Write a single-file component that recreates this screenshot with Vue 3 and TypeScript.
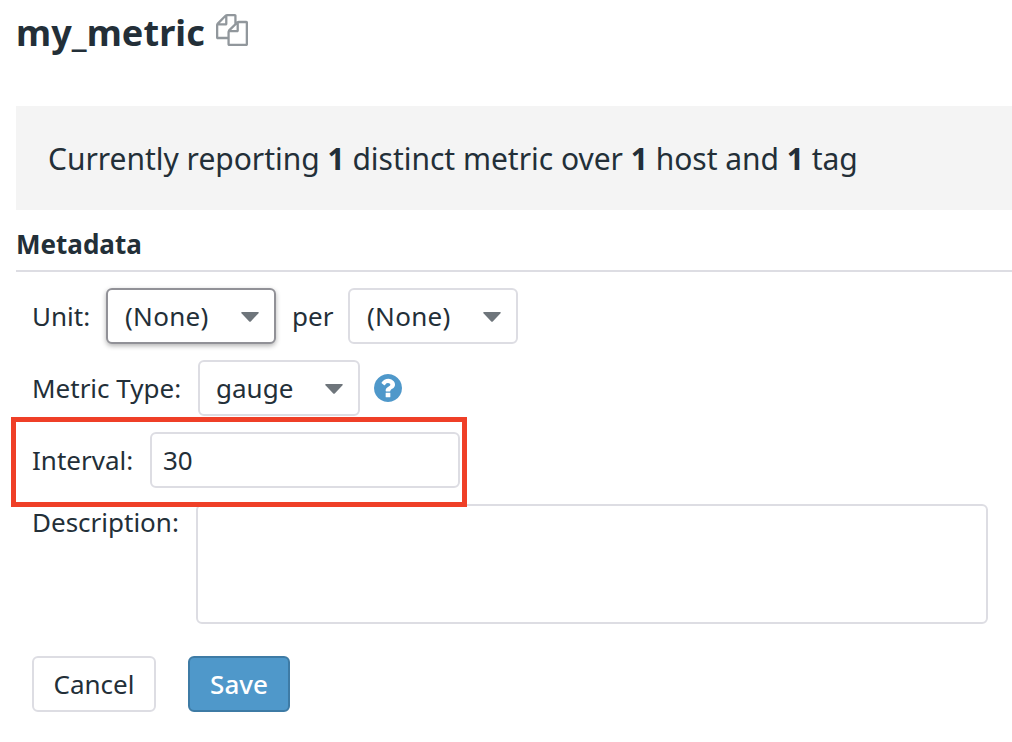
<script setup lang="ts">
import { ref } from 'vue'

const metricName = 'my_metric'
const interval = ref('30')
const description = ref('')
</script>

<template>
  <main class="page">
    <header class="title">
      <h1>{{ metricName }}</h1>
      <svg class="copy" viewBox="0 0 1792 1792" aria-hidden="true">
        <path d="M1696 384q40 0 68 28t28 68v1216q0 40-28 68t-68 28h-960q-40 0-68-28t-28-68v-288h-544q-40 0-68-28t-28-68v-672q0-40 20-88t48-76l408-408q28-28 76-48t88-20h416q40 0 68 28t28 68v328q68-40 128-40h416zm-544 213l-299 299h299v-299zm-640-384l-299 299h299v-299zm196 647l316-316v-416h-384v416q0 40-28 68t-68 28h-416v640h512v-256q0-40 20-88t48-76zm956 804v-1152h-384v416q0 40-28 68t-68 28h-416v640h896z" />
      </svg>
    </header>

    <p class="summary"><span>Currently reporting <b>1</b> distinct metric over <b>1</b> host and <b>1</b> tag</span></p>

    <h2>Metadata</h2>

    <form class="form" @submit.prevent>
      <div class="row">
        <span class="label unit">Unit:</span>
        <button type="button" class="box select none focused">
          <span>(None)</span>
          <svg class="caret" viewBox="0 0 18 10"><path d="M1 0H17Q18.500 0 17.500 1.200L10 9.200Q9 10.200 8 9.200L.5 1.200Q-.5 0 1 0Z" /></svg>
        </button>
        <span class="label per">per</span>
        <button type="button" class="box select none">
          <span>(None)</span>
          <svg class="caret" viewBox="0 0 18 10"><path d="M1 0H17Q18.500 0 17.500 1.200L10 9.200Q9 10.200 8 9.200L.5 1.200Q-.5 0 1 0Z" /></svg>
        </button>
      </div>

      <div class="row">
        <span class="label type">Metric Type:</span>
        <button type="button" class="box select gauge">
          <span>gauge</span>
          <svg class="caret" viewBox="0 0 18 10"><path d="M1 0H17Q18.500 0 17.500 1.200L10 9.200Q9 10.200 8 9.200L.5 1.200Q-.5 0 1 0Z" /></svg>
        </button>
        <svg class="help" viewBox="0 0 1536 1536" aria-hidden="true">
          <path d="M896 1248v-192q0-14-9-23t-23-9h-192q-14 0-23 9t-9 23v192q0 14 9 23t23 9h192q14 0 23-9t9-23zm256-672q0-88-55.500-163t-138.500-116-170-41q-243 0-371 213-15 24 8 42l132 100q7 6 19 6 16 0 25-12 53-68 86-92 34-24 86-24 48 0 85.500 26t37.500 59q0 38-20 61t-68 45q-63 28-115.500 86.500t-52.500 125.500v36q0 14 9 23t23 9h192q14 0 23-9t9-23q0-19 21.500-49.500t54.500-49.500q32-18 49-28.500t46-35 44.500-48 28-60.500 12.500-81zm384 192q0 209-103 385.500t-279.500 279.500-385.500 103-385.500-103-279.500-279.500-103-385.500 103-385.500 279.500-279.500 385.500-103 385.500 103 279.500 279.500 103 385.500z" />
        </svg>
      </div>

      <div class="row interval-row">
        <label class="label interval" for="interval">Interval:</label>
        <input id="interval" v-model="interval" class="box input" />
        <span class="highlight"></span>
      </div>

      <div class="row description-row">
        <label class="label description" for="description">Description:</label>
        <textarea id="description" v-model="description" class="box area"></textarea>
      </div>

      <div class="row actions">
        <button type="button" class="box cancel">Cancel</button>
        <button type="submit" class="box save">Save</button>
      </div>
    </form>
  </main>
</template>

<style>
body {
  margin: 0;
  background: #fff;
  overflow: hidden;
}
</style>

<style scoped>
.page,
.page * {
  box-sizing: border-box;
}
.page {
  height: 742px;
  padding-left: 16px;
  overflow: hidden;
  background: #fff;
  color: #232f38;
  font: 26px/36px "Noto Sans", "Open Sans", sans-serif;
}
.title {
  display: flex;
  height: 106px;
  padding-top: 8px;
}
h1 {
  width: 200px;
  margin: 0;
  font-size: 36px;
  line-height: 50px;
  font-weight: 700;
  letter-spacing: 0.08px;
  white-space: nowrap;
}
.copy {
  width: 32px;
  height: 32px;
  margin-top: 6px;
  fill: #91979c;
}
.summary {
  display: flex;
  align-items: center;
  height: 104px;
  margin: 0;
  padding: 2px 0 0 32px;
  background: #f4f4f4;
  font-size: 30px;
  line-height: 42px;
  letter-spacing: -0.02px;
  white-space: nowrap;
}
h2 {
  height: 62px;
  margin: 0;
  padding-top: 16px;
  border-bottom: 2px solid #dddde3;
  font-size: 26px;
  line-height: 36px;
  font-weight: 700;
}
.form {
  padding: 16px 24px 0 16px;
}
.row {
  display: flex;
  align-items: center;
  height: 56px;
  margin-bottom: 16px;
}
.label {
  flex: none;
  white-space: nowrap;
}
.unit { width: 74px; }
.per { width: 72px; padding-left: 16px; }
.type { width: 166px; }
.interval { width: 118px; }
.description { width: 164px; }
.box {
  height: 56px;
  margin: 0;
  border: 2px solid #dddde3;
  border-radius: 6px;
  background: #fff;
  color: inherit;
  font: inherit;
  outline: none;
}
.select {
  display: flex;
  flex: none;
  align-items: center;
  justify-content: space-between;
  width: 170px;
  padding: 0 15px 0 16px;
}
.select.none {
  padding-left: 17px;
  letter-spacing: 0.3px;
}
.select.focused {
  border-color: #919197;
  box-shadow: 0 2px 5px rgba(0, 0, 0, 0.3);
}
.select.gauge { width: 162px; }
.caret {
  width: 18px;
  height: 10px;
  margin-top: 1px;
  fill: #6e757b;
}
.help {
  width: 28px;
  height: 28px;
  margin-left: 14px;
  fill: #4f98ca;
}
.interval-row {
  position: relative;
}
.input {
  width: 310px;
  padding: 0 11px;
}
.highlight {
  position: absolute;
  z-index: 1;
  top: -15px;
  left: -21px;
  width: 456px;
  height: 90px;
  border: 5px solid #ef3f27;
  pointer-events: none;
}
.description-row {
  align-items: flex-start;
  height: 120px;
  margin-bottom: 32px;
}
.area {
  width: 792px;
  height: 120px;
  resize: none;
}
.actions {
  gap: 32px;
}
.cancel {
  width: 124px;
  padding: 0;
}
.save {
  width: 102px;
  padding: 0;
  border-color: #3e7ba5;
  background: #4f98ca;
  color: #fff;
  font-weight: 500;
}
</style>
